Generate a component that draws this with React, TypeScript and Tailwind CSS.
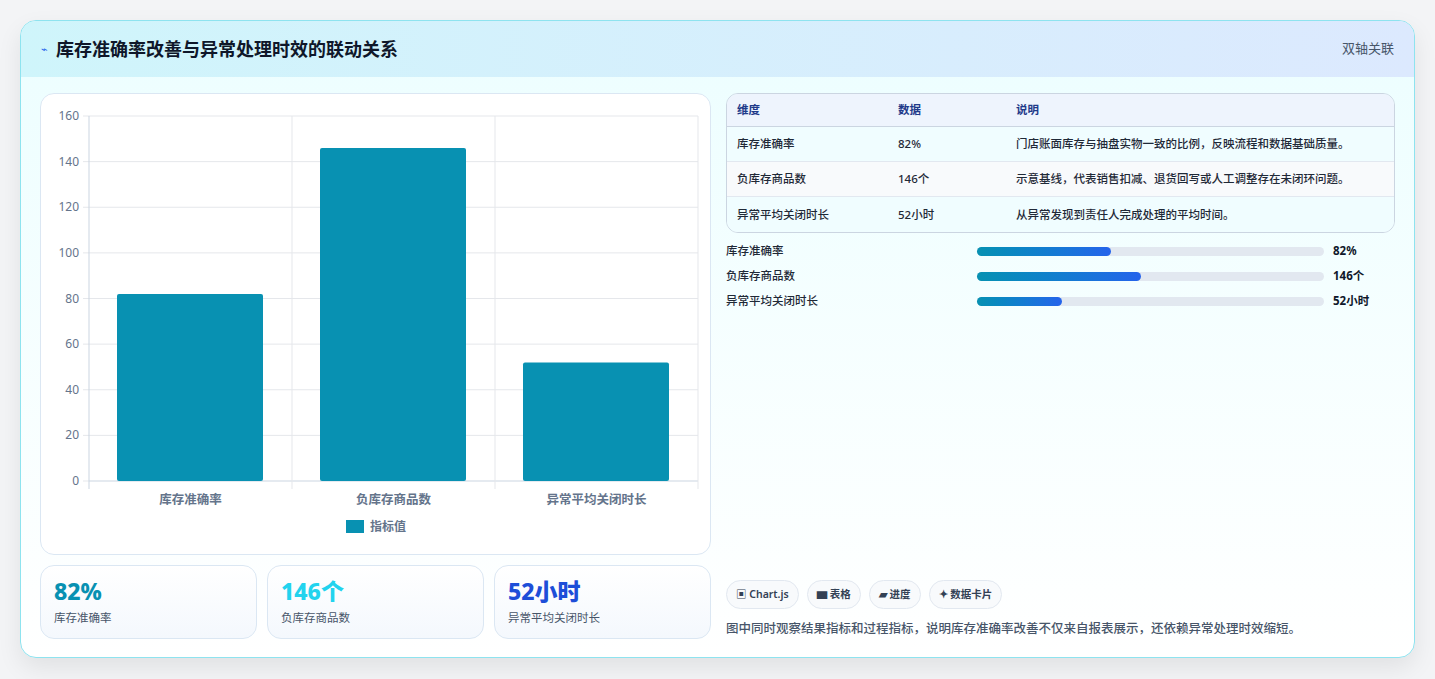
import React from "react";

const font = { fontFamily: '"Noto Sans", "Noto Sans CJK SC", sans-serif' };

function Chart() {
  const x0 = 48, y0 = 22, w = 609, h = 365;
  const ticks = [0, 20, 40, 60, 80, 100, 120, 140, 160];
  const vals = [82, 146, 52];
  const labels = ["库存准确率", "负库存商品数", "异常平均关闭时长"];
  const cw = w / 3;
  return (
    <svg width="670" height="460" className="block">
      {ticks.map((t) => {
        const y = y0 + h - (t / 160) * h;
        return (
          <g key={t}>
            <line x1={x0} x2={x0 + w} y1={y} y2={y} stroke={t === 0 ? "#cbd5e1" : "#e5e7eb"} />
            <line x1={x0 - 6} x2={x0} y1={y} y2={y} stroke="#e5e7eb" />
            <text x={x0 - 10} y={y + 4} textAnchor="end" fontSize="12" fill="#64748b" style={font}>{t}</text>
          </g>
        );
      })}
      {[0, 1, 2, 3].map((i) => (
        <line key={i} x1={x0 + i * cw} x2={x0 + i * cw} y1={y0} y2={y0 + h + 8} stroke={i === 0 ? "#cbd5e1" : "#e5e7eb"} />
      ))}
      {vals.map((v, i) => {
        const bh = (v / 160) * h;
        return <rect key={i} x={x0 + i * cw + 28} y={y0 + h - bh} width={146} height={bh} rx="2" fill="#0891b2" />;
      })}
      {labels.map((l, i) => (
        <text key={i} x={x0 + i * cw + cw / 2} y={y0 + h + 23} textAnchor="middle" fontSize="12.5" fontWeight="600" fill="#64748b" style={font}>{l}</text>
      ))}
      <rect x="305" y="426" width="18" height="13" fill="#0891b2" />
      <text x="329" y="437" fontSize="12" fontWeight="600" fill="#64748b" style={font}>指标值</text>
    </svg>
  );
}

export default function App() {
  const rows = [
    ["库存准确率", "82%", "门店账面库存与抽盘实物一致的比例，反映流程和数据基础质量。"],
    ["负库存商品数", "146个", "示意基线，代表销售扣减、退货回写或人工调整存在未闭环问题。"],
    ["异常平均关闭时长", "52小时", "从异常发现到责任人完成处理的平均时间。"],
  ];
  const bars = [["库存准确率", 134, "82%"], ["负库存商品数", 164, "146个"], ["异常平均关闭时长", 85, "52小时"]] as const;
  return (
    <div className="w-[1435px] h-[679px] bg-[#f3f4f6] pt-[20px] pl-[20px]" style={font}>
      <div className="w-[1395px] h-[638px] rounded-[16px] border border-[#8ee3ef] shadow-[0_10px_25px_rgba(0,0,0,0.08)] overflow-hidden bg-gradient-to-b from-[#ecfeff] to-white flex flex-col">
        <div className="h-[56px] flex items-center justify-between px-5 bg-gradient-to-r from-[#cff5fb] to-[#dce9fe]">
          <div className="flex items-center gap-2">
            <span className="text-[11px] text-[#2563eb]">⌁</span>
            <span className="text-[18px] font-bold text-[#0f172a]">库存准确率改善与异常处理时效的联动关系</span>
          </div>
          <span className="text-[13px] text-[#475569]">双轴关联</span>
        </div>
        <div className="flex gap-[15px] px-[19px] pt-[16px]">
          <div className="w-[671px] flex flex-col gap-[10px]">
            <div className="h-[462px] bg-white rounded-[14px] border border-[#dbe7f3]">
              <Chart />
            </div>
            <div className="grid grid-cols-3 gap-[10px]">
              {[["82%", "text-[#0891b2]", "库存准确率"], ["146个", "text-[#22d3ee]", "负库存商品数"], ["52小时", "text-[#1d4ed8]", "异常平均关闭时长"]].map(([v, c, l]) => (
                <div key={l} className="h-[74px] rounded-[14px] border border-[#dbe7f3] bg-gradient-to-b from-white to-[#f4f8fd] px-[13px] pt-[10px]">
                  <div className={`text-[23px] font-extrabold leading-[30px] ${c}`}>{v}</div>
                  <div className="text-[11.5px] text-[#475569] mt-[3px]">{l}</div>
                </div>
              ))}
            </div>
          </div>
          <div className="w-[670px] flex flex-col">
            <div className="rounded-[12px] border border-[#cbd5e1] overflow-hidden text-[11.5px]">
              <div className="grid grid-cols-[161px_118px_1fr] h-[33px] items-center bg-[#eef4fd] border-b border-[#cbd5e1] px-[10px] font-semibold text-[#1e3a8a]">
                <span>维度</span><span>数据</span><span>说明</span>
              </div>
              {rows.map((r, i) => (
                <div key={i} className={`grid grid-cols-[161px_118px_1fr] h-[35px] items-center px-[10px] text-[#1f2937] font-medium ${i === 1 ? "bg-[#f8fafc]" : "bg-[#f0fdff]"} ${i < 2 ? "border-b border-[#e2e8f0]" : ""}`}>
                  <span>{r[0]}</span><span>{r[1]}</span><span>{r[2]}</span>
                </div>
              ))}
            </div>
            <div className="flex flex-col gap-[7px] mt-[9px]">
              {bars.map(([l, w, v]) => (
                <div key={l} className="flex items-center h-[18px] text-[11.5px] font-medium text-[#1f2937]">
                  <span className="w-[251px]">{l}</span>
                  <div className="w-[347px] h-[9px] rounded-full bg-[#e2e8f0]">
                    <div className="h-full rounded-full bg-gradient-to-r from-[#0891b2] to-[#2563eb]" style={{ width: w }} />
                  </div>
                  <span className="ml-[9px] font-bold text-[#0f172a]">{v}</span>
                </div>
              ))}
            </div>
            <div className="flex-1" />
            <div className="mt-[266px] flex gap-[8px]">
              {["▣ Chart.js", "▆ 表格", "▰ 进度", "✦ 数据卡片"].map((p) => (
                <span key={p} className="h-[29px] px-[9px] flex items-center rounded-full border border-[#e2e8f0] bg-[#f8fafc] text-[10.5px] font-semibold text-[#334155]">{p}</span>
              ))}
            </div>
            <div className="mt-[11px] text-[12.5px] text-[#475569] font-medium">图中同时观察结果指标和过程指标，说明库存准确率改善不仅来自报表展示，还依赖异常处理时效缩短。</div>
          </div>
        </div>
      </div>
    </div>
  );
}
